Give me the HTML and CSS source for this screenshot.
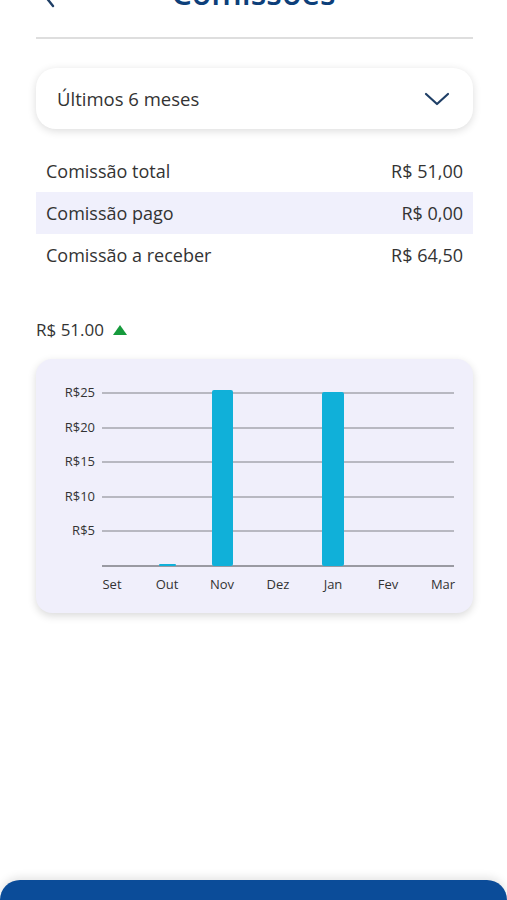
FILE: index.html
```html
<!DOCTYPE html>
<html lang="pt-BR">
<head>
    <meta charset="UTF-8">
    <meta name="viewport" content="width=device-width, initial-scale=1.0">
    <title>Comissões</title>
    <link rel="stylesheet" href="styles.css">
</head>
<body>
    <div class="screen">
        <!-- Header -->
        <header class="top-bar">
            <svg class="back-icon" width="14" height="24" viewBox="0 0 14 24">
                <path d="M11 2 L3 12 L11 22" fill="none" stroke="#1f3f66" stroke-width="2.4" stroke-linecap="round" stroke-linejoin="round"/>
            </svg>
            <h1 class="title">Comissões</h1>
        </header>
        <div class="divider"></div>

        <!-- Period select -->
        <div class="period-select">
            <span>Últimos 6 meses</span>
            <svg width="26" height="16" viewBox="0 0 26 16">
                <path d="M2 3 L13 13 L24 3" fill="none" stroke="#1f3f66" stroke-width="2.2" stroke-linecap="round" stroke-linejoin="round"/>
            </svg>
        </div>

        <!-- Summary -->
        <ul class="summary">
            <li><span>Comissão total</span><span>R$ 51,00</span></li>
            <li class="striped"><span>Comissão pago</span><span>R$ 0,00</span></li>
            <li><span>Comissão a receber</span><span>R$ 64,50</span></li>
        </ul>

        <div class="total-trend">
            <span>R$ 51.00</span>
            <svg width="16" height="12" viewBox="0 0 16 12"><path d="M8 1 L15 11 L1 11 Z" fill="#169a3c"/></svg>
        </div>

        <!-- Chart -->
        <div class="chart-card">
            <svg class="chart" width="437" height="254" viewBox="0 0 437 254">
                <g class="grid">
                    <line x1="66" y1="34" x2="418" y2="34"/>
                    <line x1="66" y1="69" x2="418" y2="69"/>
                    <line x1="66" y1="103" x2="418" y2="103"/>
                    <line x1="66" y1="138" x2="418" y2="138"/>
                    <line x1="66" y1="172" x2="418" y2="172"/>
                    <line class="axis" x1="66" y1="207" x2="418" y2="207"/>
                </g>
                <g class="y-labels">
                    <text x="59" y="38">R$25</text>
                    <text x="59" y="73">R$20</text>
                    <text x="59" y="107">R$15</text>
                    <text x="59" y="142">R$10</text>
                    <text x="59" y="176">R$5</text>
                </g>
                <g class="bars">
                    <rect x="123" y="205" width="17" height="2" rx="1"/>
                    <rect x="176" y="31" width="21" height="176" rx="2"/>
                    <rect x="286" y="33" width="22" height="174" rx="2"/>
                </g>
                <g class="x-labels">
                    <text x="76" y="230">Set</text>
                    <text x="131" y="230">Out</text>
                    <text x="186" y="230">Nov</text>
                    <text x="242" y="230">Dez</text>
                    <text x="297" y="230">Jan</text>
                    <text x="352" y="230">Fev</text>
                    <text x="407" y="230">Mar</text>
                </g>
            </svg>
        </div>

        <div class="bottom-bar"></div>
    </div>
</body>
</html>
```

FILE: styles.css
```css
/* General */
html, body {
    margin: 0;
    padding: 0;
    background: #fff;
}

body {
    font-family: 'Open Sans', 'Noto Sans', sans-serif;
    color: #333;
    overflow: hidden;
}

.screen {
    height: 900px;
    display: flex;
    flex-direction: column;
    overflow: hidden;
}

/* Header (scrolled, only bottom part visible) */
.top-bar {
    position: relative;
    height: 36px;
    margin: -25px 36px 0;
    display: flex;
    align-items: center;
    justify-content: center;
}

.back-icon {
    position: absolute;
    left: 6px;
    top: 9px;
}

.title {
    margin: 0;
    font-size: 32px;
    font-weight: 600;
    color: #0d3f7a;
    line-height: 36px;
}

.divider {
    height: 2px;
    margin: 26px 34px 0 36px;
    background: #dedede;
}

/* Period select */
.period-select {
    margin: 29px 34px 0 36px;
    height: 61px;
    padding: 0 23px 0 21px;
    border-radius: 20px;
    background: #fff;
    box-shadow: 0 2px 8px rgba(0, 0, 0, 0.14);
    display: flex;
    align-items: center;
    justify-content: space-between;
    font-size: 18.5px;
    color: #333;
}

/* Summary rows */
.summary {
    list-style: none;
    margin: 21px 34px 0 36px;
    padding: 0;
}

.summary li {
    height: 42px;
    padding: 0 10px;
    display: flex;
    align-items: center;
    justify-content: space-between;
    font-size: 18px;
    color: #333;
}

.summary li.striped {
    background: #f0f0fc;
}

.total-trend {
    margin: 42px 36px 0;
    display: flex;
    align-items: center;
    gap: 8px;
    font-size: 17px;
    color: #333;
}

/* Chart card */
.chart-card {
    margin: 18px 34px 0 36px;
    height: 254px;
    border-radius: 16px;
    background: #f0effb;
    box-shadow: 0 3px 8px rgba(0, 0, 0, 0.15);
}

.chart {
    display: block;
}

.grid line {
    stroke: #a6a6ae;
    stroke-width: 1.5;
}

.grid line.axis {
    stroke: #9a9aa2;
    stroke-width: 2;
}

.y-labels text {
    font-family: 'Open Sans', sans-serif;
    font-size: 13px;
    font-weight: 500;
    fill: #333;
    text-anchor: end;
}

.x-labels text {
    font-family: 'Open Sans', sans-serif;
    font-size: 13px;
    fill: #333;
    text-anchor: middle;
}

.bars rect {
    fill: #10b0d9;
}

/* Bottom action bar */
.bottom-bar {
    margin-top: auto;
    height: 20px;
    border-radius: 24px 24px 0 0;
    background: #0b4c99;
    box-shadow: 0 -3px 8px rgba(0, 0, 0, 0.1);
}
```
